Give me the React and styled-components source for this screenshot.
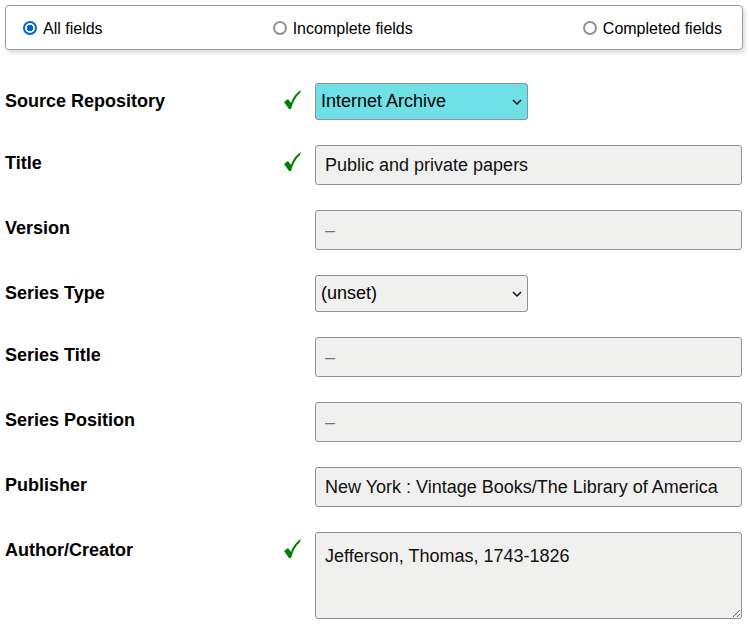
import React from "react";
import styled, { createGlobalStyle } from "styled-components";

const Global = createGlobalStyle`
  *{box-sizing:border-box}
  body{margin:0;background:#fff;color:#000;font-family:"Liberation Sans",Arial,sans-serif;overflow:hidden}
`;
const Page = styled.main`padding:5px 6px 0 5px;width:749px;height:625px;overflow:hidden;`;
const FilterBar = styled.fieldset`
  display:flex;justify-content:space-between;align-items:center;margin:0;height:45px;width:738px;
  padding:3px 20px 0 17px;border:1px solid #999;border-radius:4px;box-shadow:2px 3px 4px #ddd;
`;
const Option = styled.label`display:flex;align-items:center;font-size:16px;line-height:20px;`;
const Radio = styled.input`appearance:none;width:14px;height:14px;margin:0 6px 2px 0;border-radius:50%;
  border:${p => p.checked ? "2px solid #0060df" : "2px solid #8f8f9d"};
  background:${p => p.checked ? "radial-gradient(circle,#0060df 0 3px,#fff 3.5px)" : "#fff"};`;
const Form = styled.div`padding-top:33px;`;
const Row = styled.div`display:grid;grid-template-columns:279px 31px 427px;height:${p => p.$h}px;align-items:start;`;
const Label = styled.div`display:flex;align-items:center;gap:9px;height:36px;font-weight:bold;font-size:18px;`;
const Control = styled.input`width:427px;height:40px;padding:1px 9px 0;border:1px solid #8f8f9d;border-radius:3px;
  background:#f0f0ef;color:#111;font:18px "Liberation Sans",Arial,sans-serif;outline:none;
  &::placeholder{color:#757575;opacity:1}`;
const SelectBox = styled.div`display:flex;justify-content:space-between;align-items:center;width:213px;height:37px;
  padding:0 5px;border:1px solid #8f8f9d;border-radius:3px;font-size:18px;background:${p => p.$active ? "#6fe0e6" : "#f0f0ef"};`;
const Area = styled.textarea`width:427px;height:87px;padding:13px 9px;border:1px solid #8f8f9d;border-radius:3px;
  background:#f0f0ef;color:#111;font:18px "Liberation Sans",Arial,sans-serif;resize:vertical;`;

const Check = () => <svg width="20" height="36" viewBox="0 0 20 36"><path d="M0 19L4 16L7 20Q10 11 17 7L16 10Q10 15 7 26L5 26Z" fill="green"/></svg>;
const Chevron = () => <svg width="10" height="8" viewBox="0 0 10 8"><path d="M1 2L5 6L9 2" fill="none" stroke="#111" strokeWidth="1.5"/></svg>;
const rows = [
  ["Source Repository", "select", "Internet Archive", 62, true],
  ["Title", "text", "Public and private papers", 65, true],
  ["Version", "text", "", 65],
  ["Series Type", "select", "(unset)", 62],
  ["Series Title", "text", "", 65],
  ["Series Position", "text", "", 65],
  ["Publisher", "text", "New York : Vintage Books/The Library of America", 65],
  ["Author/Creator", "area", "Jefferson, Thomas, 1743-1826", 90, true],
];
export default function App(){
  return <Page><Global/><FilterBar>
    {["All fields","Incomplete fields","Completed fields"].map((t,i)=><Option key={t}><Radio type="radio" name="f" checked={i===0} readOnly/>{t}</Option>)}
  </FilterBar><Form>{rows.map(([l,t,v,h,c])=><Row key={l} $h={h}>
    <Label>{l}</Label><div>{c&&<Check/>}</div>
    {t==="select"?<SelectBox $active={c}>{v}<Chevron/></SelectBox>:t==="area"?<Area defaultValue={v}/>:<Control defaultValue={v} placeholder="–"/>}
  </Row>)}</Form></Page>;
}
